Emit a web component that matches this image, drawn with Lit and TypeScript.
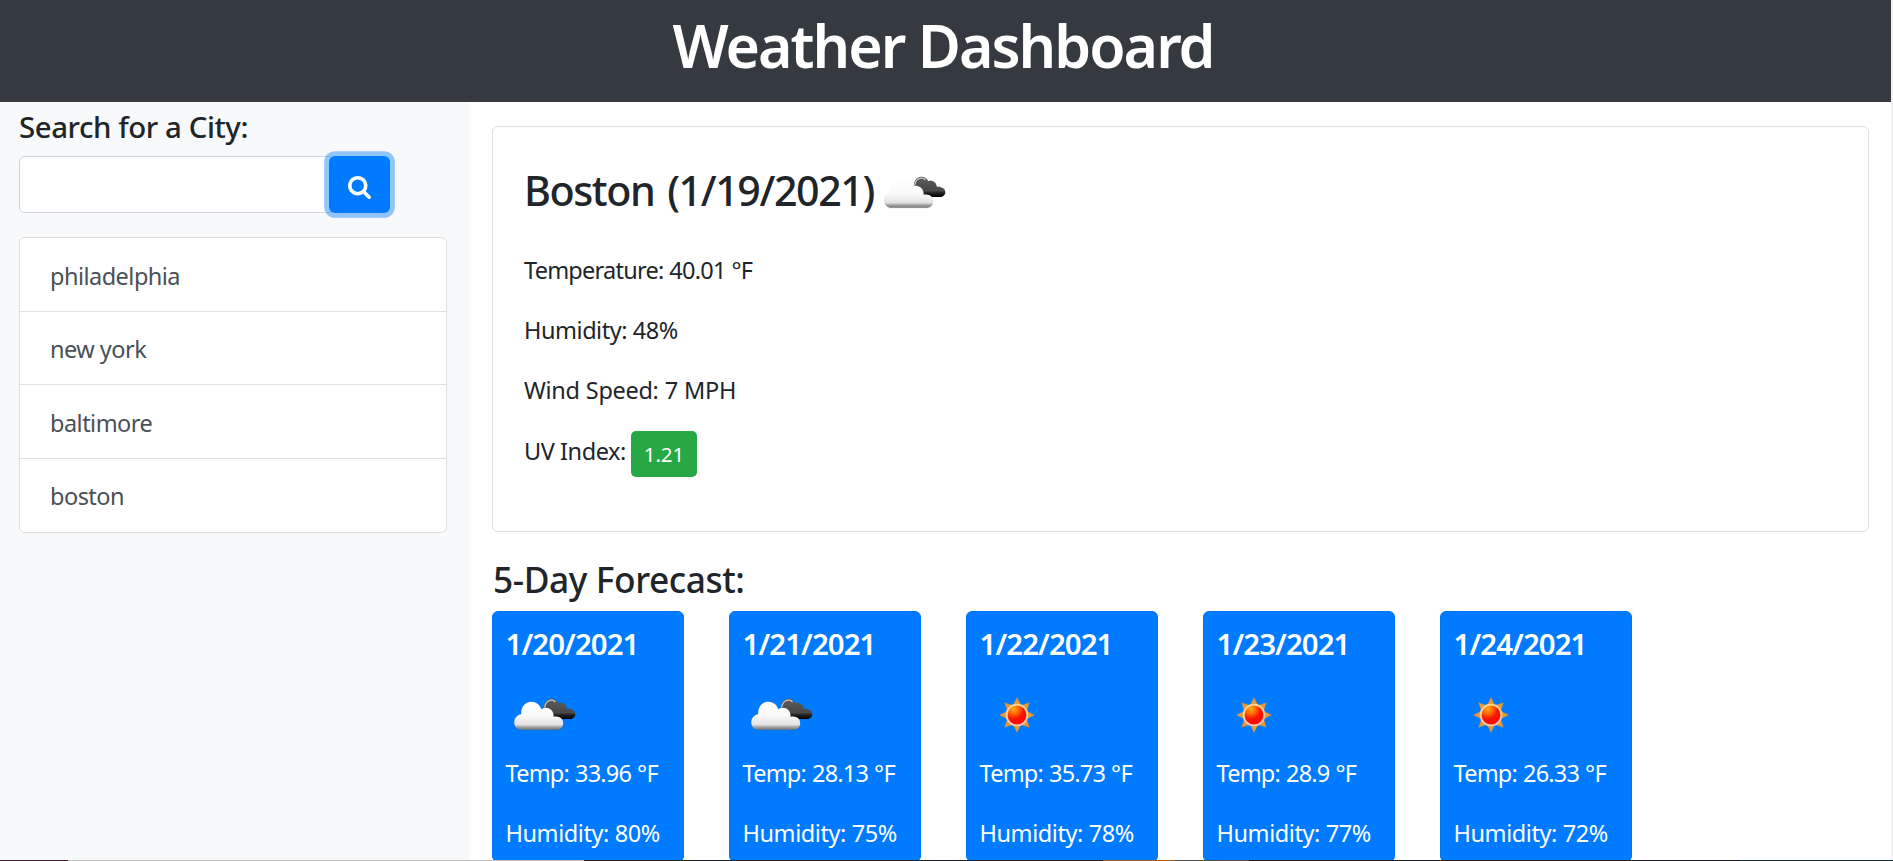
import { LitElement, html, css, svg } from "lit";
import { customElement, property } from "lit/decorators.js";

interface Day {
  date: string;
  icon: "clouds" | "sun";
  temp: string;
  humidity: string;
}

const cities = ["philadelphia", "new york", "baltimore", "boston"];

const days: Day[] = [
  { date: "1/20/2021", icon: "clouds", temp: "33.96", humidity: "80" },
  { date: "1/21/2021", icon: "clouds", temp: "28.13", humidity: "75" },
  { date: "1/22/2021", icon: "sun", temp: "35.73", humidity: "78" },
  { date: "1/23/2021", icon: "sun", temp: "28.9", humidity: "77" },
  { date: "1/24/2021", icon: "sun", temp: "26.33", humidity: "72" },
];

@customElement("weather-icon")
export class WeatherIcon extends LitElement {
  @property() kind = "clouds";

  static styles = css`
    :host { display: block; width: 75px; height: 75px; flex: none; }
    svg { display: block; width: 75px; height: 75px; }
  `;

  private clouds() {
    return svg`
      <defs>
        <linearGradient id="front" gradientUnits="userSpaceOnUse" x1="0" y1="23" x2="0" y2="52">
          <stop offset="0" stop-color="#fff"/>
          <stop offset=".5" stop-color="#fafafa"/>
          <stop offset=".82" stop-color="#e2e2e2"/>
          <stop offset=".89" stop-color="#a8a8a8"/>
          <stop offset="1" stop-color="#707070"/>
        </linearGradient>
        <linearGradient id="back" gradientUnits="userSpaceOnUse" x1="0" y1="21" x2="0" y2="41">
          <stop offset="0" stop-color="#5c5c5c"/>
          <stop offset=".68" stop-color="#484848"/>
          <stop offset=".85" stop-color="#161616"/>
          <stop offset="1" stop-color="#000"/>
        </linearGradient>
        <filter id="soft" x="-10%" y="-10%" width="120%" height="125%">
          <feDropShadow dx="0" dy=".2" stdDeviation=".6" flood-color="#000" flood-opacity=".25"/>
        </filter>
      </defs>
      <g filter="url(#soft)">
        <path fill="url(#back)" d="M38 31C37.500 25 41 20.800 45.500 20.800C48.500 20.800 51 22.500 52.200 25.200C56.500 23.800 60.300 26.300 60.800 30.700C65.500 30.300 69.300 32.700 69.300 36C69.300 39.500 66.500 41 63.500 41H46Z"/>
        <path fill="none" stroke="#c4c4c4" stroke-width="1.300" d="M38.600 29.500C39 24.500 42.500 21.900 46 22.200C47.500 22.300 48.700 23 49.500 24"/>
      </g>
      <g filter="url(#soft)">
        <path fill="url(#front)" d="M16 51.800C11.300 51.800 8.300 48.500 8.300 44.400C8.300 40 11.200 37 15.200 36.300C14.800 29 19.300 23.800 25.200 23.800C30 23.800 33.700 26.700 35.200 31.200C41.500 27.500 48 32 47.600 38.700C53 37.500 57.200 40.500 57.200 45C57.200 49 54.400 51.800 50.600 51.800Z"/>
      </g>`;
  }

  private sun() {
    const rays = [0, 45, 90, 135, 180, 225, 270, 315];
    return svg`
      <defs>
        <radialGradient id="disc" cx=".33" cy=".18" r=".75">
          <stop offset="0" stop-color="#ffae18"/>
          <stop offset=".35" stop-color="#ff6a08"/>
          <stop offset=".7" stop-color="#f51605"/>
          <stop offset="1" stop-color="#ff0a00"/>
        </radialGradient>
        <linearGradient id="rim" x1="0" y1="0" x2="0" y2="1">
          <stop offset="0" stop-color="#ffd98c"/>
          <stop offset="1" stop-color="#ffc9b4"/>
        </linearGradient>
      </defs>
      <g transform="translate(37 37)">
        ${rays.map((a) => svg`<path fill="#e59a34" stroke="#b58a52" stroke-width=".4" transform="rotate(${a})" d="M-4 -9.500L0 -17.500L4 -9.500Z"/>`)}
        <circle r="11.300" fill="url(#rim)"/>
        <circle r="9.400" fill="url(#disc)"/>
      </g>`;
  }

  render() {
    return html`<svg viewBox="0 0 75 75">${this.kind === "sun" ? this.sun() : this.clouds()}</svg>`;
  }
}

@customElement("app-root")
export class AppRoot extends LitElement {
  static styles = css`
    :host {
      display: grid;
      grid-template-columns: minmax(0, 1fr) 2px;
      grid-template-rows: 860px 1px;
      height: 861px;
      overflow: hidden;
      background: #fff;
      color: #212529;
      font-family: "Noto Sans", "Open Sans", sans-serif;
      font-size: 23.5px;
      line-height: 36px;
    }
    * { box-sizing: border-box; }
    h1, h2, h3, h4, p, ul { margin: 0; padding: 0; font-weight: 500; }
    p { font-weight: 400; white-space: nowrap; }
    .page { display: flex; flex-direction: column; overflow: hidden; }
    .scroll { background: #f1f1f1; }
    .edge {
      grid-column: 1 / -1;
      background: linear-gradient(90deg, #4a2030 0 68px, #c1c1c1 68px 584px, #202226 584px 1103px, #a8601f 1103px 1175px, #4b4b4b 1175px 1249px, #1d1e21 1249px 1740px, #17323a 1740px);
    }
    .top { flex: none; height: 102px; padding-top: 9px; background: #343a40; color: #fff; text-align: center; }
    .top h1 { font-size: 59px; font-weight: 600; line-height: 72px; letter-spacing: -1.98px; padding-right: 5px; }
    .body { flex: 1; display: flex; min-height: 0; }
    .side { width: 470px; flex: none; padding: 7px 23px 0 19px; background: #f8f9fa; }
    .side h4 { font-size: 29.4px; line-height: 36px; letter-spacing: -.42px; }
    .search { display: flex; height: 57px; margin-top: 11px; }
    .search input {
      width: 316px; height: 57px; margin: 0 -6px 0 0; border: 1px solid #ced4da; border-radius: 6px;
      background: #fff; outline: none; font: inherit; padding: 0 18px;
    }
    .search button {
      width: 61px; height: 57px; margin: 0; padding: 5px 0 0; border: 0; border-radius: 6px; background: #007bff;
      box-shadow: 0 0 0 4.8px rgba(38, 143, 255, .5); display: flex; align-items: center; justify-content: center;
      position: relative;
    }
    .search svg { width: 23px; height: 23px; fill: #fff; display: block; }
    .cities { list-style: none; margin-top: 24px; border: 1px solid #dfdfdf; border-radius: 6px; background: #fff; color: #495057; overflow: hidden; }
    .cities li { height: 73.670px; padding: 19.500px 30px 0; border-bottom: 1px solid #dfdfdf; letter-spacing: -.52px; font-weight: 400; }
    .cities li:last-child { border-bottom: 0; height: 73px; }
    .main { flex: 1; min-width: 0; padding: 24px 22px 0; }
    .current { height: 406px; padding: 29px 31px 0; border: 1px solid #dfdfdf; border-radius: 6px; background: #fff; }
    .city { display: flex; align-items: center; height: 75px; }
    .city h3 { width: 351.500px; padding-bottom: 7px; font-size: 41.200px; letter-spacing: -1.420px; word-spacing: 3.500px; white-space: nowrap; }
    .current p { margin-bottom: 24px; }
    .current .first { margin-top: 21px; }
    .temp { letter-spacing: -.76px; word-spacing: .5px; }
    .hum { letter-spacing: -.46px; }
    .current .wind { letter-spacing: -.32px; word-spacing: .4px; }
    .current .uv { display: flex; align-items: flex-start; margin-top: -1px; letter-spacing: -.45px; gap: 6px; }
    .uv span { padding-top: 2px; width: 101px; }
    .uv b {
      height: 46px; width: 66px; border-radius: 5px; background: #28a745; color: #fff; text-align: center;
      font-size: 20.600px; line-height: 46px; font-weight: 400; letter-spacing: -.1px;
    }
    .main h2 { margin: 29px 0 14px; padding-left: 1px; font-size: 35.300px; line-height: 36px; letter-spacing: -.42px; }
    .days { display: flex; gap: 45px; }
    .day { width: 192px; height: 251px; flex: none; padding: 13.500px 12.500px 0; border: 1px solid #0074f0; border-radius: 6px; background: #007bff; color: #fff; }
    .day h4 { font-size: 29.400px; font-weight: 600; line-height: 36px; letter-spacing: -.9px; margin-bottom: 16px; }
    .day p { margin: 2px 0 24px; }
    .day .hum { margin: 0; letter-spacing: -.42px; }
  `;

  render() {
    return html`
      <div class="page">
        <header class="top"><h1>Weather Dashboard</h1></header>
        <div class="body">
          <aside class="side">
            <h4>Search for a City:</h4>
            <div class="search">
              <input type="text" aria-label="City" />
              <button aria-label="Search">
                <svg viewBox="0 128 1664 1664"><path d="M1152 832q0-185-131.500-316.500T704 384 387.500 515.500 256 832t131.500 316.500T704 1280t316.500-131.500T1152 832zm512 832q0 52-38 90t-90 38q-54 0-90-38l-343-342q-179 124-399 124-143 0-273.500-55.500t-225-150-150-225T0 832t55.500-273.500 150-225 225-150T704 128t273.500 55.500 225 150 150 225T1408 832q0 220-124 399l343 343q37 37 37 90z"/></svg>
              </button>
            </div>
            <ul class="cities">${cities.map((c) => html`<li>${c}</li>`)}</ul>
          </aside>
          <main class="main">
            <section class="current">
              <div class="city"><h3>Boston (1/19/2021)</h3><weather-icon kind="clouds"></weather-icon></div>
              <p class="temp first">Temperature: 40.01 °F</p>
              <p class="hum">Humidity: 48%</p>
              <p class="wind">Wind Speed: 7 MPH</p>
              <p class="uv"><span>UV Index:</span><b>1.21</b></p>
            </section>
            <h2>5-Day Forecast:</h2>
            <div class="days">
              ${days.map((d) => html`
                <article class="day">
                  <h4>${d.date}</h4>
                  <weather-icon kind=${d.icon}></weather-icon>
                  <p class="temp">Temp: ${d.temp} °F</p>
                  <p class="hum">Humidity: ${d.humidity}%</p>
                </article>`)}
            </div>
          </main>
        </div>
      </div>
      <div class="scroll"></div>
      <div class="edge"></div>`;
  }
}
